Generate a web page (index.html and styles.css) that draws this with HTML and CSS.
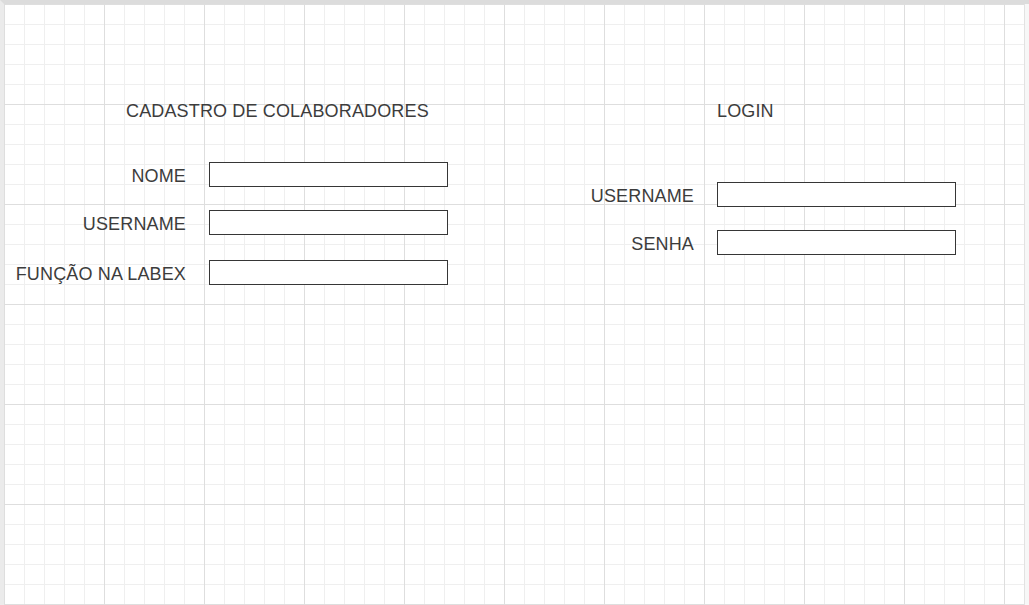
FILE: index.html
```html
<!DOCTYPE html>
<html lang="pt-BR">
<head>
<meta charset="utf-8">
<title>Cadastro de Colaboradores</title>
<link rel="stylesheet" href="styles.css">
</head>
<body>
<div class="frame">
  <div class="canvas">
    <section class="panel panel-register">
      <h2 class="title title-register">CADASTRO DE COLABORADORES</h2>
      <div class="rows">
        <div class="form-row">
          <label class="label" for="nome">NOME</label>
          <input class="field" id="nome" type="text">
        </div>
        <div class="form-row">
          <label class="label" for="user1">USERNAME</label>
          <input class="field" id="user1" type="text">
        </div>
        <div class="form-row form-row-spaced">
          <label class="label" for="funcao">FUNÇÃO NA LABEX</label>
          <input class="field" id="funcao" type="text">
        </div>
      </div>
    </section>
    <section class="panel panel-login">
      <h2 class="title title-login">LOGIN</h2>
      <div class="rows">
        <div class="form-row">
          <label class="label" for="user2">USERNAME</label>
          <input class="field" id="user2" type="text">
        </div>
        <div class="form-row">
          <label class="label" for="senha">SENHA</label>
          <input class="field" id="senha" type="password">
        </div>
      </div>
    </section>
  </div>
</div>
</body>
</html>
```

FILE: styles.css
```css
html, body {
  margin: 0;
  padding: 0;
}

body {
  background: #f7f7f7;
  font-family: "Liberation Sans", Arial, sans-serif;
  color: #3c3c3c;
  overflow: hidden;
}

.frame {
  width: 1029px;
  height: 605px;
  box-sizing: border-box;
  border-top: 4px solid #dcdcdc;
  border-left: 4px solid #ebebeb;
}

.canvas {
  width: 1021px;
  height: 601px;
  box-sizing: border-box;
  border-right: 1px solid #e2e2e2;
  background-color: #ffffff;
  background-image:
    linear-gradient(to right, #dedede 1px, transparent 1px),
    linear-gradient(to bottom, #dedede 1px, transparent 1px),
    linear-gradient(to right, #efefef 1px, transparent 1px),
    linear-gradient(to bottom, #efefef 1px, transparent 1px);
  background-size: 100px 100px, 100px 100px, 20px 20px, 20px 20px;
  display: flex;
  align-items: flex-start;
  padding-top: 97px;
}

.panel {
  display: flex;
  flex-direction: column;
}

.panel-login {
  margin-left: 64px;
}

.title {
  margin: 0;
  font-size: 18px;
  line-height: 20px;
  font-weight: normal;
  letter-spacing: 0.15px;
  color: #3c3c3c;
  white-space: nowrap;
}

.title-register {
  padding-left: 122px;
  margin-bottom: 41px;
}

.title-login {
  padding-left: 205px;
  margin-bottom: 61px;
}

.rows {
  display: flex;
  flex-direction: column;
  gap: 23px;
}

.form-row {
  display: grid;
  grid-template-columns: 182px 239px;
  column-gap: 23px;
  align-items: center;
}

.form-row-spaced {
  margin-top: 2px;
}

.label {
  padding-top: 2px;
  font-size: 18px;
  line-height: 20px;
  letter-spacing: 0.15px;
  text-align: right;
  white-space: nowrap;
  color: #3c3c3c;
}

.field {
  display: block;
  box-sizing: border-box;
  width: 239px;
  height: 25px;
  margin: 0;
  padding: 0 4px;
  border: 1px solid #363636;
  border-radius: 0;
  background: #ffffff;
  outline: none;
  font: 14px "Liberation Sans", Arial, sans-serif;
}
```
